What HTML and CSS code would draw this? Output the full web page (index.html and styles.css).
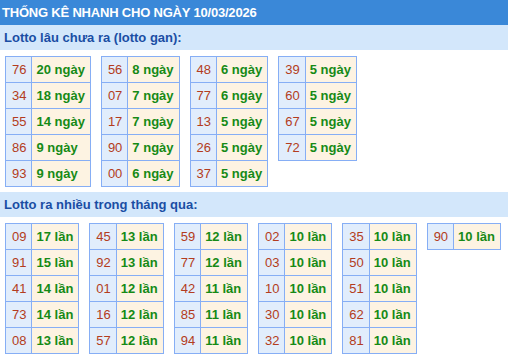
FILE: index.html
```html
<!DOCTYPE html>
<html lang="vi">
<head>
<meta charset="utf-8">
<title>Thống kê nhanh</title>
<link rel="stylesheet" href="styles.css">
</head>
<body>
<div class="page">
  <div class="title">THỐNG KÊ NHANH CHO NGÀY 10/03/2026</div>

  <div class="subtitle">Lotto lâu chưa ra (lotto gan):</div>
  <div class="tables">
    <table class="lt">
      <tr><td class="num">76</td><td class="val">20 ngày</td></tr>
      <tr><td class="num">34</td><td class="val">18 ngày</td></tr>
      <tr><td class="num">55</td><td class="val">14 ngày</td></tr>
      <tr><td class="num">86</td><td class="val">9 ngày</td></tr>
      <tr><td class="num">93</td><td class="val">9 ngày</td></tr>
    </table>
    <table class="lt">
      <tr><td class="num">56</td><td class="val">8 ngày</td></tr>
      <tr><td class="num">07</td><td class="val">7 ngày</td></tr>
      <tr><td class="num">17</td><td class="val">7 ngày</td></tr>
      <tr><td class="num">90</td><td class="val">7 ngày</td></tr>
      <tr><td class="num">00</td><td class="val">6 ngày</td></tr>
    </table>
    <table class="lt">
      <tr><td class="num">48</td><td class="val">6 ngày</td></tr>
      <tr><td class="num">77</td><td class="val">6 ngày</td></tr>
      <tr><td class="num">13</td><td class="val">5 ngày</td></tr>
      <tr><td class="num">26</td><td class="val">5 ngày</td></tr>
      <tr><td class="num">37</td><td class="val">5 ngày</td></tr>
    </table>
    <table class="lt">
      <tr><td class="num">39</td><td class="val">5 ngày</td></tr>
      <tr><td class="num">60</td><td class="val">5 ngày</td></tr>
      <tr><td class="num">67</td><td class="val">5 ngày</td></tr>
      <tr><td class="num">72</td><td class="val">5 ngày</td></tr>
    </table>
  </div>

  <div class="subtitle">Lotto ra nhiều trong tháng qua:</div>
  <div class="tables">
    <table class="lt">
      <tr><td class="num">09</td><td class="val">17 lần</td></tr>
      <tr><td class="num">91</td><td class="val">15 lần</td></tr>
      <tr><td class="num">41</td><td class="val">14 lần</td></tr>
      <tr><td class="num">73</td><td class="val">14 lần</td></tr>
      <tr><td class="num">08</td><td class="val">13 lần</td></tr>
    </table>
    <table class="lt">
      <tr><td class="num">45</td><td class="val">13 lần</td></tr>
      <tr><td class="num">92</td><td class="val">13 lần</td></tr>
      <tr><td class="num">01</td><td class="val">12 lần</td></tr>
      <tr><td class="num">16</td><td class="val">12 lần</td></tr>
      <tr><td class="num">57</td><td class="val">12 lần</td></tr>
    </table>
    <table class="lt">
      <tr><td class="num">59</td><td class="val">12 lần</td></tr>
      <tr><td class="num">77</td><td class="val">12 lần</td></tr>
      <tr><td class="num">42</td><td class="val">11 lần</td></tr>
      <tr><td class="num">85</td><td class="val">11 lần</td></tr>
      <tr><td class="num">94</td><td class="val">11 lần</td></tr>
    </table>
    <table class="lt">
      <tr><td class="num">02</td><td class="val">10 lần</td></tr>
      <tr><td class="num">03</td><td class="val">10 lần</td></tr>
      <tr><td class="num">10</td><td class="val">10 lần</td></tr>
      <tr><td class="num">30</td><td class="val">10 lần</td></tr>
      <tr><td class="num">32</td><td class="val">10 lần</td></tr>
    </table>
    <table class="lt">
      <tr><td class="num">35</td><td class="val">10 lần</td></tr>
      <tr><td class="num">50</td><td class="val">10 lần</td></tr>
      <tr><td class="num">51</td><td class="val">10 lần</td></tr>
      <tr><td class="num">62</td><td class="val">10 lần</td></tr>
      <tr><td class="num">81</td><td class="val">10 lần</td></tr>
    </table>
    <table class="lt">
      <tr><td class="num">90</td><td class="val">10 lần</td></tr>
    </table>
  </div>
</div>
</body>
</html>
```

FILE: styles.css
```css
html, body {
  margin: 0;
  padding: 0;
  background: #ffffff;
}

.page {
  font-family: "Liberation Sans", Arial, sans-serif;
  font-size: 13px;
}

.title {
  height: 25px;
  line-height: 25px;
  padding-left: 2px;
  background: #3a88d8;
  color: #ffffff;
  font-weight: bold;
  letter-spacing: -0.2px;
  white-space: nowrap;
}

.subtitle {
  height: 25px;
  line-height: 25px;
  padding-left: 4px;
  background: #d3e7fb;
  color: #1a4ea4;
  font-weight: bold;
}

.tables {
  display: flex;
  align-items: flex-start;
  gap: 10px;
  padding: 6px 5px 5px;
}

.lt {
  border-collapse: collapse;
}

.lt td {
  border: 1px solid #86aef5;
  padding: 5px 5px;
  line-height: 15px;
  white-space: nowrap;
}

.lt .num {
  background: #e1edfc;
  color: #b33c20;
  padding-left: 6px;
  padding-right: 5px;
}

.lt .val {
  background: #fdf3e2;
  color: #168a16;
  font-weight: bold;
  padding-left: 4px;
  padding-right: 5px;
}
```
